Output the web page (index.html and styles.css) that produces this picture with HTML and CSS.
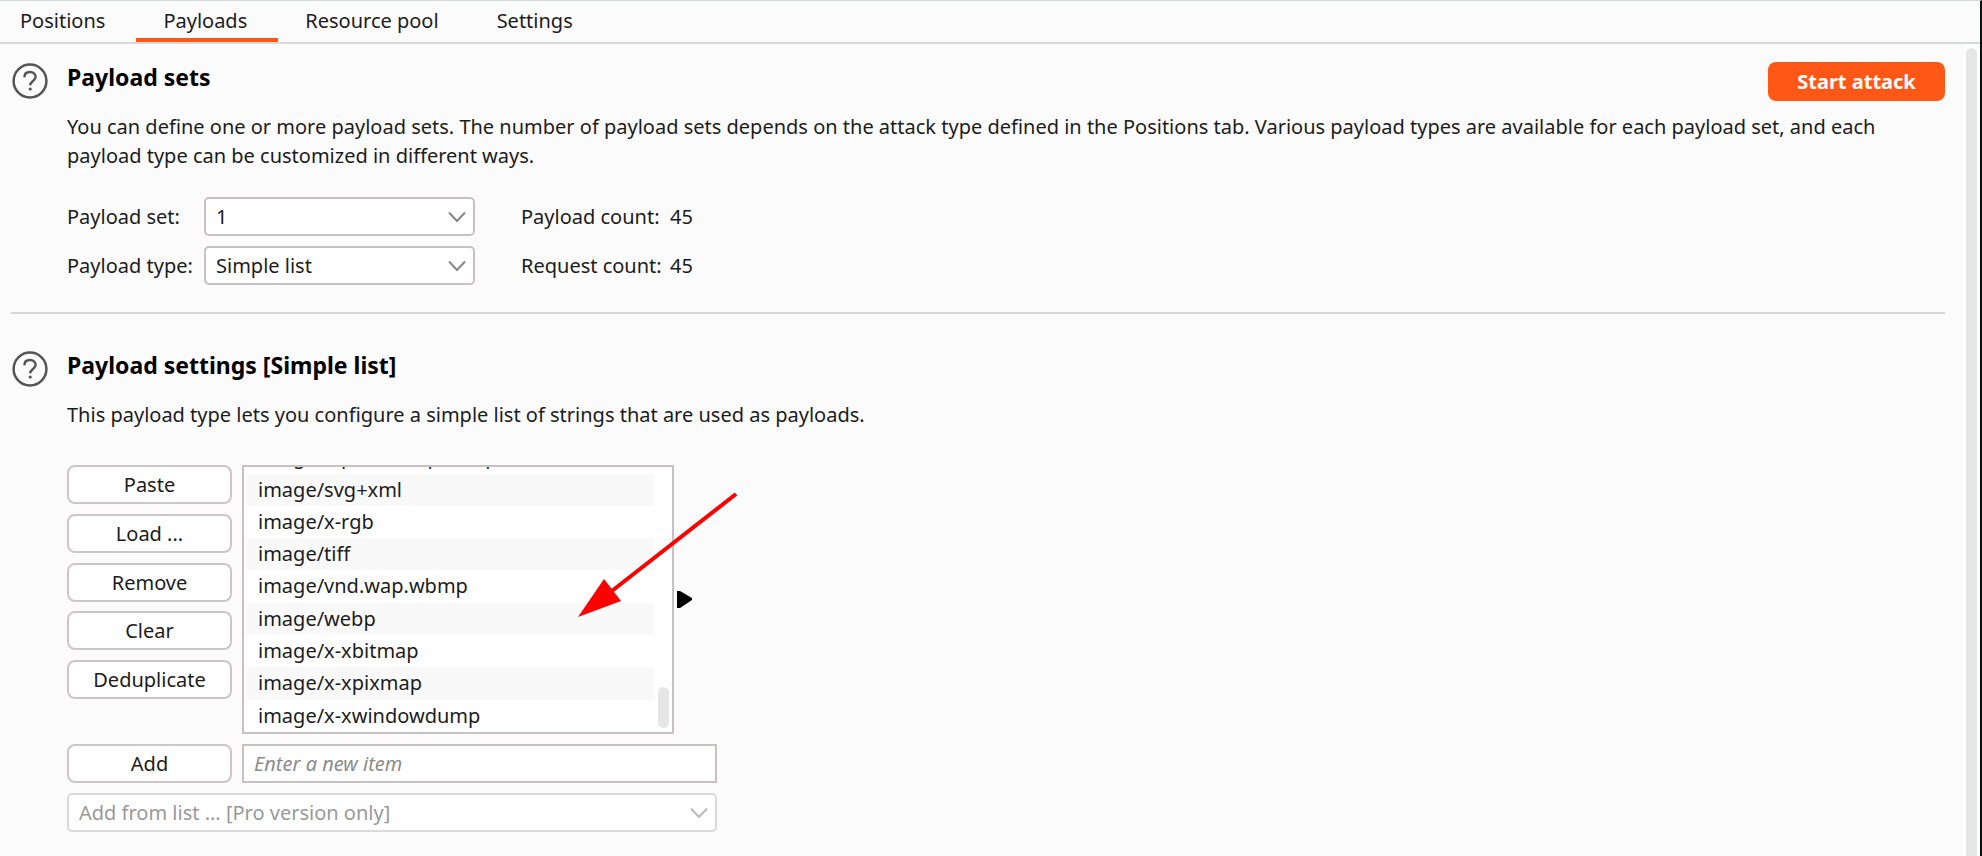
FILE: index.html
```html
<!DOCTYPE html>
<html lang="en">
<head>
<meta charset="utf-8">
<title>Payloads</title>
<link rel="stylesheet" href="styles.css">
</head>
<body>
<div class="window">
  <nav class="tabs">
    <a class="tab" href="#positions">Positions</a>
    <a class="tab tab-active" href="#payloads">Payloads</a>
    <a class="tab" href="#pool">Resource pool</a>
    <a class="tab" href="#settings">Settings</a>
  </nav>
  <div class="body">
    <main class="content">
      <section class="section section-first">
        <button class="help" type="button" aria-label="Help">
          <svg viewBox="0 0 36 36" width="36" height="36" fill="none" stroke="#555"><circle cx="18" cy="18" r="16.400" stroke-width="2.5"/><path d="M12.4 14.2C12.4 10.8 14.8 9 18 9s5.6 2 5.6 4.900c0 3.800-5.400 4.300-5.400 8.300" stroke-width="2.500"/><circle cx="18.200" cy="26" r="1.600" fill="#555" stroke="none"/></svg>
        </button>
        <div class="main">
          <div class="head">
            <h2 class="title">Payload sets</h2>
            <button class="start" type="button">Start attack</button>
          </div>
          <p class="text">You can define one or more payload sets. The number of payload sets depends on the attack type defined in the Positions tab. Various payload types are available for each payload set, and each payload type can be customized in different ways.</p>
          <div class="fields">
            <label for="set">Payload set:</label>
            <div class="combo">
              <select id="set"><option>1</option></select>
              <svg class="chevron" viewBox="0 0 18 12" width="18" height="12" fill="none" stroke="#888" stroke-width="2"><path d="M1 1.500l8 8.500 8-8.500"/></svg>
            </div>
            <span class="count">Payload count:</span><span>45</span>
            <label for="type">Payload type:</label>
            <div class="combo">
              <select id="type"><option>Simple list</option></select>
              <svg class="chevron" viewBox="0 0 18 12" width="18" height="12" fill="none" stroke="#888" stroke-width="2"><path d="M1 1.500l8 8.500 8-8.500"/></svg>
            </div>
            <span class="count">Request count:</span><span>45</span>
          </div>
        </div>
      </section>
      <hr class="rule">
      <section class="section">
        <button class="help" type="button" aria-label="Help">
          <svg viewBox="0 0 36 36" width="36" height="36" fill="none" stroke="#555"><circle cx="18" cy="18" r="16.400" stroke-width="2.5"/><path d="M12.4 14.2C12.4 10.8 14.8 9 18 9s5.6 2 5.6 4.900c0 3.800-5.400 4.300-5.400 8.300" stroke-width="2.500"/><circle cx="18.200" cy="26" r="1.600" fill="#555" stroke="none"/></svg>
        </button>
        <div class="main">
          <div class="head">
            <h2 class="title">Payload settings [Simple list]</h2>
          </div>
          <p class="text">This payload type lets you configure a simple list of strings that are used as payloads.</p>
          <div class="editor">
            <div class="actions">
              <button class="btn" type="button">Paste</button>
              <button class="btn" type="button">Load ...</button>
              <button class="btn" type="button">Remove</button>
              <button class="btn" type="button">Clear</button>
              <button class="btn" type="button">Deduplicate</button>
            </div>
            <div class="list-row">
              <div class="list-box">
                <ul class="list">
                  <li>image/x-portable-pixmap</li>
                  <li>image/svg+xml</li>
                  <li>image/x-rgb</li>
                  <li>image/tiff</li>
                  <li>image/vnd.wap.wbmp</li>
                  <li>image/webp</li>
                  <li>image/x-xbitmap</li>
                  <li>image/x-xpixmap</li>
                  <li>image/x-xwindowdump</li>
                </ul>
                <div class="list-bar"><div class="list-thumb"></div></div>
              </div>
              <button class="expand" type="button" aria-label="Expand">
                <svg viewBox="0 0 15 17" width="15" height="17"><path d="M0 0h3l12 7v2L3 17H0z" fill="#000"/></svg>
              </button>
              <svg class="pointer" viewBox="0 0 160 128" width="160" height="128"><path d="M158 3L30 103" stroke="#f00" stroke-width="4"/><path d="M0 126L26 88 43 110z" fill="#f00"/></svg>
            </div>
            <button class="btn" type="button">Add</button>
            <input class="entry" type="text" placeholder="Enter a new item" aria-label="New item">
            <div class="combo combo-off">
              <select aria-label="Add from list" disabled><option>Add from list ... [Pro version only]</option></select>
              <svg class="chevron" viewBox="0 0 18 12" width="18" height="12" fill="none" stroke="#bbb" stroke-width="2"><path d="M1 1.500l8 8.500 8-8.500"/></svg>
            </div>
          </div>
        </div>
      </section>
    </main>
    <div class="scrollbar"><div class="thumb"></div></div>
  </div>
</div>
</body>
</html>
```
FILE: styles.css
```css
* { box-sizing: border-box; }
body {
  margin: 0;
  background: #fbfbfb;
  color: #1c1c1c;
  font: 20px/29px "Noto Sans", sans-serif;
}
button, input, select { font: inherit; color: inherit; }
button { cursor: pointer; }
.window {
  display: flex;
  flex-direction: column;
  min-height: 100vh;
  border-top: 1px solid #d5dbda;
  border-right: 2px solid #0c100c;
}
.tabs {
  display: flex;
  border-bottom: 2px solid #d5dbda;
}
.tab {
  padding: 5px 31px 3px 27px;
  border-bottom: 4px solid transparent;
  color: inherit;
  text-decoration: none;
}
.tab:first-child { padding-left: 20px; }
.tab-active { border-color: #ff5715; }
.body { display: flex; flex: 1; }
.content { flex: 1; padding: 0 18px 0 11px; }
.section { display: flex; gap: 18px; padding: 36px 0 0; }
.section-first { padding-top: 18px; }
.help {
  flex: none;
  align-self: flex-start;
  width: 38px;
  padding: 1px 1px 0;
  border: 0;
  background: none;
}
.help svg { display: block; }
.main { flex: 1; }
.head {
  display: flex;
  justify-content: space-between;
  min-height: 39px;
}
.title {
  margin: 0;
  color: #000;
  font-size: 23px;
  line-height: 31px;
}
.start {
  width: 177px;
  height: 39px;
  padding: 0;
  border: 0;
  border-radius: 8px;
  background: #ff5715;
  color: #fff;
  font-weight: bold;
}
.text { margin: 11px 0 0; }
.fields {
  display: grid;
  grid-template-columns: 127px 271px 175px auto;
  justify-content: start;
  align-items: center;
  gap: 10px;
  margin-top: 27px;
}
.count { margin-left: 36px; white-space: nowrap; }
.combo { position: relative; }
.combo select {
  display: block;
  appearance: none;
  width: 100%;
  height: 39px;
  padding: 0 10px;
  border: 2px solid #c8c1c2;
  border-radius: 5px;
  background: #fff;
}
.chevron { position: absolute; right: 9px; top: 14px; }
.combo-off { grid-column: 1 / -1; }
.combo-off select { border-color: #dadada; color: #999; opacity: 1; }
.rule {
  height: 2px;
  margin: 27px 0 0;
  border: 0;
  background: #d8d8d8;
}
.editor {
  display: grid;
  grid-template-columns: 165px 475px;
  gap: 10px;
  margin-top: 36px;
}
.actions {
  display: flex;
  flex-direction: column;
  justify-content: space-between;
  height: 234px;
}
.btn {
  height: 39px;
  padding: 0;
  border: 2px solid #cdc6c7;
  border-radius: 8px;
  background: #fff;
}
.list-row { position: relative; display: flex; align-items: center; }
.list-box {
  display: flex;
  flex: none;
  width: 432px;
  height: 269px;
  padding: 0 3px 0 1px;
  border: 2px solid #c8c1c2;
  background: #fff;
}
.list {
  display: flex;
  flex: 1;
  flex-direction: column;
  justify-content: flex-end;
  margin: 0;
  padding: 0;
  overflow: hidden;
  line-height: 32px;
  list-style: none;
}
.list li { flex: 0 0 calc(100% / 8.2); padding-left: 13px; }
.list li:nth-child(even) { background: #f9f9f9; }
.list-bar { display: flex; flex: none; align-items: flex-end; width: 15px; padding: 0 0 4px 4px; }
.list-thumb { width: 11px; height: 41px; border-radius: 6px; background: #e6e6e6; }
.expand { margin-left: 3px; padding: 0; border: 0; background: none; }
.expand svg { display: block; }
.pointer { position: absolute; left: 336px; top: 26px; pointer-events: none; }
.entry {
  width: 100%;
  height: 39px;
  padding: 0 10px;
  border: 2px solid #c8c1c2;
  background: #fff;
}
.entry::placeholder { color: #8c8c8c; font-style: italic; opacity: 1; }
.scrollbar { flex: none; display: flex; width: 17px; padding: 4px 3px 0; background: #fff; }
.thumb { flex: 1; border-radius: 6px 6px 0 0; background: #e6e6e6; }
```
